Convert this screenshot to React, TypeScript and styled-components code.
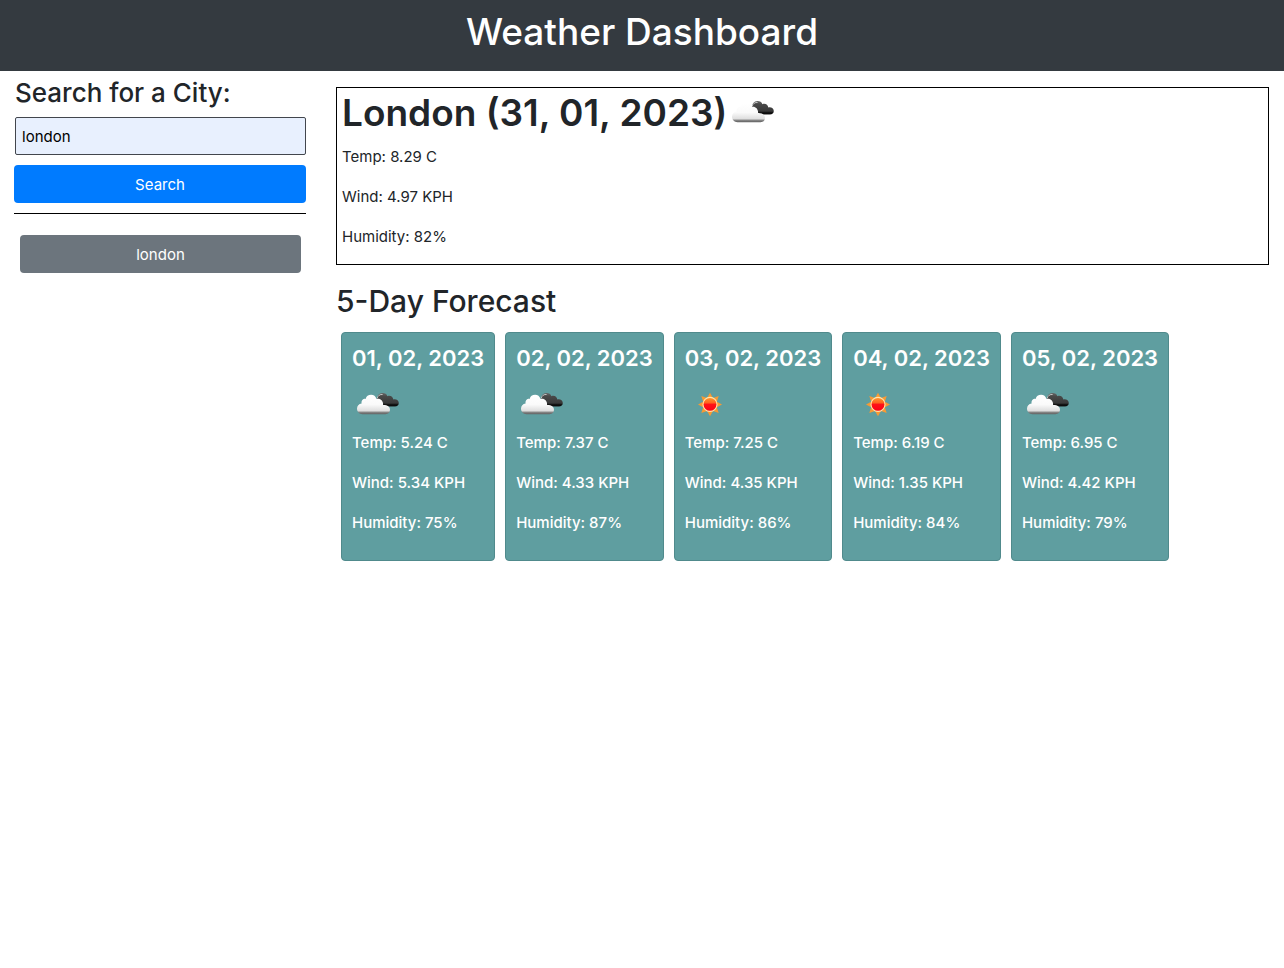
import React, { useId, useState } from "react";
import styled, { createGlobalStyle } from "styled-components";

const GlobalStyle = createGlobalStyle`
  *, *::before, *::after { box-sizing: border-box; }
  body {
    margin: 0;
    background: #fff;
    color: #212529;
    font: 400 15px/24px Inter, "Liberation Sans", sans-serif;
  }
  h1, h2, h3, p { margin: 0; }
`;

const Header = styled.header`
  padding: 8px 16px 15px;
  background: #343a40;
  color: #fff;
  text-align: center;
`;

const Title = styled.h1`
  font-size: 37px;
  font-weight: 500;
  line-height: 48px;
`;

const Layout = styled.div`
  display: grid;
  grid-template-columns: 1fr 3fr;
`;

const Sidebar = styled.aside`
  padding: 5px 15px 0 14px;
`;

const SearchForm = styled.form`
  display: flex;
  flex-direction: column;
  padding-bottom: 10px;
  border-bottom: 1px solid #000;
`;

const SearchLabel = styled.label`
  margin-bottom: 7px;
  padding-left: 1px;
  font-size: 26px;
  font-weight: 500;
  line-height: 34px;
`;

const SearchInput = styled.input`
  height: 38px;
  min-width: 0;
  margin: 0 0 10px 1px;
  padding: 0 6px;
  border: 1px solid #42464d;
  border-radius: 2px;
  background: #e8f0fe;
  color: #000;
  font: inherit;
`;

const Button = styled.button<{ $tone: string }>`
  height: 38px;
  padding: 2px 12px 0;
  border: 0;
  border-radius: 4px;
  background: ${(p) => p.$tone};
  color: #fff;
  font: inherit;
  cursor: pointer;
`;

const History = styled.div`
  display: flex;
  flex-direction: column;
  gap: 10px;
  padding: 21px 5px 0 6px;
`;

const Main = styled.main`
  min-width: 0;
  padding: 16px 15px 0;
`;

const Current = styled.section`
  padding: 0 5px;
  border: 1px solid #000;
`;

const CurrentHeading = styled.h2`
  display: flex;
  align-items: center;
  height: 50px;
  margin-bottom: 6px;
  font-size: 37px;
  font-weight: 600;
  line-height: 50px;
`;

const Reading = styled.p`
  margin-bottom: 14px;
  line-height: 26px;
`;

const ForecastTitle = styled.h2`
  margin: 17px 0 12px;
  font-size: 30px;
  font-weight: 500;
  line-height: 38px;
`;

const Cards = styled.div`
  display: flex;
  flex-wrap: wrap;
  gap: 10px;
  padding: 0 5px;
`;

const Card = styled.article`
  padding: 10px;
  border: 1px solid #508a8c;
  border-radius: 4px;
  background: #5f9ea0;
  color: #fff;
  font-weight: 500;
`;

const CardDate = styled.h3`
  margin-bottom: 7px;
  font-size: 22px;
  font-weight: 600;
  line-height: 30px;
`;

const Icon = styled.svg`
  display: block;
  flex: none;
  width: 50px;
  height: 50px;
`;

type Sky = "clouds" | "sun";

function WeatherIcon({ sky }: { sky: Sky }) {
  const id = useId().replace(/[^a-zA-Z0-9]/g, "");
  if (sky === "sun") {
    return (
      <Icon viewBox="0 0 50 50" role="img" aria-label="Clear sky">
        <defs>
          <linearGradient id={id} x1="0" y1="0" x2="0" y2="1">
            <stop offset="0" stopColor="#ff9a2b" />
            <stop offset=".38" stopColor="#ff6420" />
            <stop offset=".5" stopColor="#ff1216" />
            <stop offset="1" stopColor="#fa0019" />
          </linearGradient>
        </defs>
        <path
          fill="#f79a34"
          d="M25 12.7 28 18 33.7 15.9 31.8 21.7 37 24.4 31.8 27.2 33.7 33 28 31 25 36.3 22 31 16.3 33 18.2 27.2 13 24.4 18.2 21.7 16.3 15.9 22 18Z"
        />
        <circle cx="25" cy="24.4" r="7" fill={`url(#${id})`} stroke="#ffe6ae" strokeWidth="1.1" />
      </Icon>
    );
  }
  return (
    <Icon viewBox="0 0 50 50" role="img" aria-label="Broken clouds">
      <defs>
        <linearGradient id={id + "w"} x1="0" y1="15" x2="0" y2="34" gradientUnits="userSpaceOnUse">
          <stop offset="0" stopColor="#fff" />
          <stop offset=".5" stopColor="#fafafa" />
          <stop offset=".84" stopColor="#dedede" />
          <stop offset=".9" stopColor="#8b8b8b" />
          <stop offset="1" stopColor="#626262" />
        </linearGradient>
        <linearGradient id={id + "d"} x1="0" y1="13" x2="0" y2="27" gradientUnits="userSpaceOnUse">
          <stop offset="0" stopColor="#666" />
          <stop offset=".25" stopColor="#484848" />
          <stop offset=".72" stopColor="#393939" />
          <stop offset=".86" stopColor="#050505" />
          <stop offset="1" stopColor="#222" />
        </linearGradient>
      </defs>
      <path
        fill={`url(#${id}d)`}
        d="M25 20C25 16 27 13 30.5 13C33 13 34.7 14.2 35.4 16.2C38.3 15.1 41 16.7 41.3 19.5C44.2 18.8 46.8 20.6 46.8 23C46.8 25.2 45.2 26.6 43 26.6H32Z"
      />
      <path
        fill="none"
        stroke="#ddd"
        strokeWidth=".8"
        d="M25.2 18.3C25.8 15.7 28.1 14 30.6 14.5"
      />
      <path
        fill={`url(#${id}w)`}
        d="M10.5 34.2C7.3 34.2 5 31.8 5 28.8C5 26 6.9 23.9 9.6 23.5C9.1 20.7 11.2 18.5 13.7 18.9C14.2 16.3 16.4 14.8 19.1 14.8C21.7 14.8 23.7 16.4 24.5 18.9C28.1 17.8 31.5 20.8 31.1 25.1C35.4 25 38 27 38 29.8C38 32.5 36.2 34.2 33.5 34.2Z"
      />
    </Icon>
  );
}

interface Weather {
  date: string;
  sky: Sky;
  temp: string;
  wind: string;
  humidity: number;
}

const forecast: Weather[] = [
  { date: "01, 02, 2023", sky: "clouds", temp: "5.24", wind: "5.34", humidity: 75 },
  { date: "02, 02, 2023", sky: "clouds", temp: "7.37", wind: "4.33", humidity: 87 },
  { date: "03, 02, 2023", sky: "sun", temp: "7.25", wind: "4.35", humidity: 86 },
  { date: "04, 02, 2023", sky: "sun", temp: "6.19", wind: "1.35", humidity: 84 },
  { date: "05, 02, 2023", sky: "clouds", temp: "6.95", wind: "4.42", humidity: 79 },
];

function Readings({ temp, wind, humidity }: Pick<Weather, "temp" | "wind" | "humidity">) {
  return (
    <>
      <Reading>Temp: {temp} C</Reading>
      <Reading>Wind: {wind} KPH</Reading>
      <Reading>Humidity: {humidity}%</Reading>
    </>
  );
}

export default function App() {
  const [city, setCity] = useState("london");
  return (
    <>
      <GlobalStyle />
      <Header>
        <Title>Weather Dashboard</Title>
      </Header>
      <Layout>
        <Sidebar>
          <SearchForm onSubmit={(e) => e.preventDefault()}>
            <SearchLabel htmlFor="city">Search for a City:</SearchLabel>
            <SearchInput id="city" type="text" value={city} onChange={(e) => setCity(e.target.value)} />
            <Button type="submit" $tone="#007bff">Search</Button>
          </SearchForm>
          <History>
            <Button type="button" $tone="#6c757d" onClick={() => setCity("london")}>london</Button>
          </History>
        </Sidebar>
        <Main>
          <Current>
            <CurrentHeading>
              London (31, 01, 2023)
              <WeatherIcon sky="clouds" />
            </CurrentHeading>
            <Readings temp="8.29" wind="4.97" humidity={82} />
          </Current>
          <ForecastTitle>5-Day Forecast</ForecastTitle>
          <Cards>
            {forecast.map((day) => (
              <Card key={day.date}>
                <CardDate>{day.date}</CardDate>
                <WeatherIcon sky={day.sky} />
                <Readings {...day} />
              </Card>
            ))}
          </Cards>
        </Main>
      </Layout>
    </>
  );
}
